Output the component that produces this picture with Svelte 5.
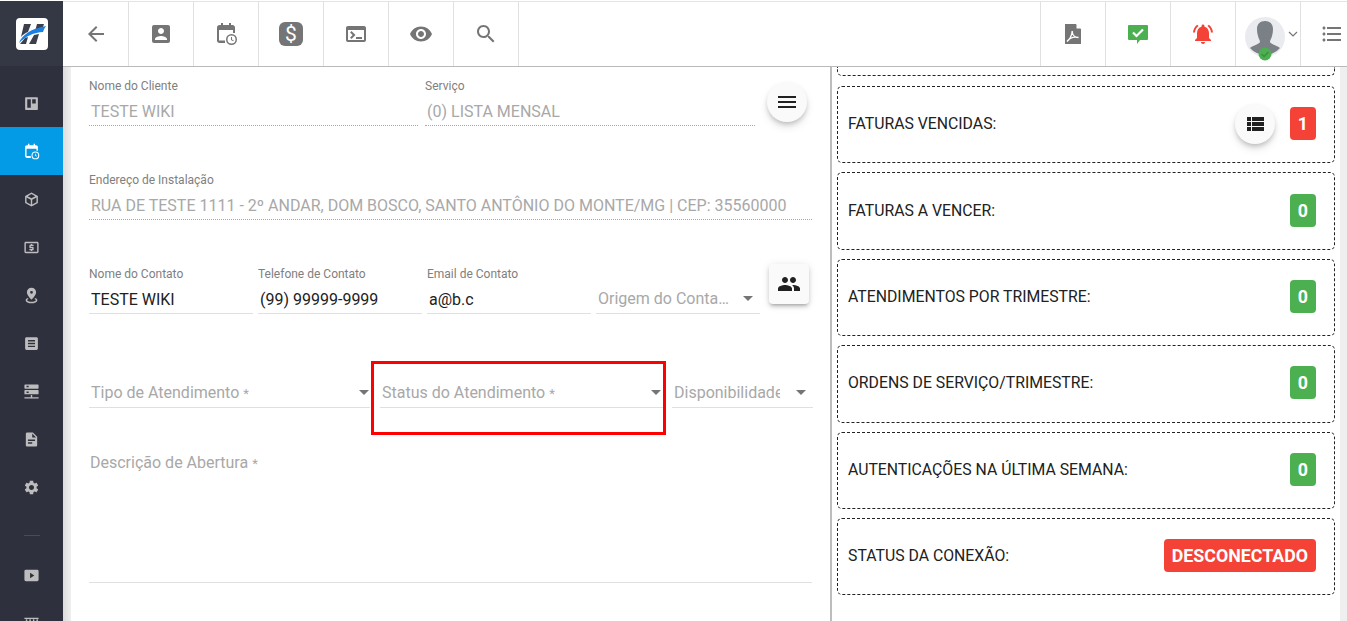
<script>
  const icons = {
    back: 'M20 11H7.83l5.59-5.59L12 4l-8 8 8 8 1.41-1.41L7.83 13H20v-2z',
    contact: 'M3 5v14a2 2 0 0 0 2 2h14c1.1 0 2-.9 2-2V5c0-1.1-.9-2-2-2H5a2 2 0 0 0-2 2zm12 4c0 1.66-1.34 3-3 3s-3-1.34-3-3 1.34-3 3-3 3 1.34 3 3zm-9 8c0-2 4-3.1 6-3.1s6 1.1 6 3.1v1H6v-1z',
    schedule: 'M7 1h2v2h6V1h2v2h1.500C19.900 3 21 4.100 21 5.500V11h-2V8H5v10.500h6V21H5.500C4.100 21 3 19.900 3 18.500v-13C3 4.100 4.100 3 5.500 3H7V1zM17.500 12a5.500 5.500 0 1 1 0 11 5.500 5.500 0 0 1 0-11zm0 1.500a4 4 0 1 0 0 8 4 4 0 0 0 0-8zM17 15h1v2.400l1.800 1-.5.8L17 18v-3z',
    terminal: 'M20 4H4c-1.110 0-2 .9-2 2v12c0 1.100.89 2 2 2h16c1.100 0 2-.9 2-2V6c0-1.100-.9-2-2-2zm0 14H4V8h16v10zm-2-1h-6v-2h6v2zM7.500 17l-1.410-1.410L8.670 13l-2.590-2.590L7.500 9l4 4-4 4z',
    eye: 'M12 4.500C7 4.500 2.730 7.610 1 12c1.730 4.390 6 7.500 11 7.500s9.270-3.110 11-7.500c-1.730-4.390-6-7.500-11-7.500zM12 17c-2.760 0-5-2.240-5-5s2.240-5 5-5 5 2.240 5 5-2.240 5-5 5zm0-8c-1.660 0-3 1.340-3 3s1.340 3 3 3 3-1.340 3-3-1.340-3-3-3z',
    search: 'M15.500 14h-.79l-.28-.27C15.410 12.590 16 11.110 16 9.500 16 5.910 13.090 3 9.500 3S3 5.910 3 9.500 5.910 16 9.500 16c1.610 0 3.090-.59 4.230-1.570l.27.28v.79l5 4.990L20.490 19l-4.990-5zm-6 0C7.010 14 5 11.990 5 9.500S7.010 5 9.500 5 14 7.010 14 9.500 11.990 14 9.500 14z',
    chat: 'M3 3h18a1 1 0 0 1 1 1v13a1 1 0 0 1-1 1h-7l-3 4v-4H3a1 1 0 0 1-1-1V4a1 1 0 0 1 1-1z',
    bell: 'M7.580 4.080L6.150 2.650C3.750 4.480 2.170 7.300 2.030 10.500h2c.15-2.650 1.510-4.970 3.550-6.420zm12.390 6.420h2c-.15-3.200-1.730-6.020-4.120-7.850l-1.420 1.430c2.020 1.450 3.390 3.770 3.540 6.420zM18 11c0-3.070-1.640-5.640-4.500-6.320V4c0-.83-.67-1.500-1.500-1.500s-1.500.67-1.500 1.500v.68C7.630 5.360 6 7.920 6 11v5l-2 2v1h16v-1l-2-2v-5zm-6 11c.14 0 .27-.01.4-.04.65-.14 1.180-.58 1.440-1.180.1-.24.15-.5.15-.78h-4c.01 1.100.9 2 2.010 2z',
    list: 'M4 10.500c-.83 0-1.500.67-1.500 1.500s.67 1.500 1.500 1.500 1.500-.67 1.500-1.500-.67-1.500-1.500-1.500zm0-6c-.83 0-1.500.67-1.500 1.500S3.170 7.500 4 7.500 5.500 6.830 5.500 6 4.830 4.500 4 4.500zm0 12c-.83 0-1.500.68-1.500 1.500s.68 1.500 1.500 1.500 1.500-.68 1.500-1.500-.67-1.500-1.500-1.500zM7 19h14v-2H7v2zm0-6h14v-2H7v2zm0-8v2h14V5H7z',
    menu: 'M3 18h18v-2H3v2zm0-5h18v-2H3v2zm0-7v2h18V6H3z',
    viewList: 'M4 14h4v-4H4v4zm0 5h4v-4H4v4zM4 9h4V5H4v4zm5 5h12v-4H9v4zm0 5h12v-4H9v4zM9 5v4h12V5H9z',
    people: 'M16 11c1.660 0 2.990-1.340 2.990-3S17.660 5 16 5c-1.660 0-3 1.340-3 3s1.340 3 3 3zm-8 0c1.660 0 2.990-1.340 2.990-3S9.660 5 8 5C6.340 5 5 6.340 5 8s1.340 3 3 3zm0 2c-2.330 0-7 1.170-7 3.500V19h14v-2.500c0-2.330-4.670-3.500-7-3.500zm8 0c-.29 0-.62.02-.97.05 1.160.84 1.970 1.970 1.970 3.450V19h6v-2.500c0-2.330-4.670-3.500-7-3.500z',
    board: 'M4 3h16a1 1 0 0 1 1 1v16a1 1 0 0 1-1 1H4a1 1 0 0 1-1-1V4a1 1 0 0 1 1-1zm2 3v12h5V6H6zm7 0v6h5V6h-5z',
    box: 'M12 2l9 5v10l-9 5-9-5V7l9-5zm0 2.300L6.600 7.300 12 10.300l5.400-3L12 4.300zM5 9v6.800l6 3.300v-6.800L5 9zm14 0l-6 3.300v6.800l6-3.300V9z',
    money: 'M11 17h2v-1h1c.55 0 1-.45 1-1v-3c0-.55-.45-1-1-1h-3v-1h4V8h-2V7h-2v1h-1c-.55 0-1 .45-1 1v3c0 .55.45 1 1 1h3v1H9v2h2v1zm9-13H4c-1.110 0-1.990.89-1.990 2L2 18c0 1.110.89 2 2 2h16c1.110 0 2-.89 2-2V6c0-1.110-.89-2-2-2zm0 14H4V6h16v12z',
    pin: 'M12 1a6.500 6.500 0 0 1 6.500 6.500C18.500 12 12 18 12 18S5.500 12 5.500 7.500A6.500 6.500 0 0 1 12 1zm0 4.500a2 2 0 1 0 0 4 2 2 0 0 0 0-4zM6.500 15.500l1.300 1.400C6.400 17.400 5.800 18 5.800 18.600c0 1.200 2.800 2.200 6.200 2.200s6.200-1 6.200-2.200c0-.6-.6-1.200-2-1.700l1.300-1.400c1.800.8 2.700 1.900 2.700 3.100 0 2.500-3.600 4.400-8.200 4.400s-8.200-1.900-8.200-4.400c0-1.200.9-2.300 2.700-3.100z',
    article: 'M19 3H5c-1.100 0-2 .9-2 2v14c0 1.100.9 2 2 2h14c1.100 0 2-.9 2-2V5c0-1.100-.9-2-2-2zm-2 14H7v-2h10v2zm0-4H7v-2h10v2zm0-4H7V7h10v2z',
    server: 'M3 2h18a1 1 0 0 1 1 1v4a1 1 0 0 1-1 1H3a1 1 0 0 1-1-1V3a1 1 0 0 1 1-1zm2 2v2h3V4H5zm-2 6h18a1 1 0 0 1 1 1v4a1 1 0 0 1-1 1H3a1 1 0 0 1-1-1v-4a1 1 0 0 1 1-1zm2 2v2h3v-2H5zm6 5h2v3h9v2H2v-2h9v-3z',
    doc: 'M14 2H6c-1.100 0-1.990.9-1.990 2L4 20c0 1.100.89 2 1.990 2H18c1.100 0 2-.9 2-2V8l-6-6zm-1 16H7v-2h6v2zm4-4H7v-2h10v2zm-4-5V3.500L18.500 9H13z',
    gear: 'M19.140 12.940c.04-.3.06-.61.06-.94 0-.32-.02-.64-.07-.94l2.030-1.580c.18-.14.23-.41.12-.61l-1.920-3.320c-.12-.22-.37-.29-.59-.22l-2.390.96c-.5-.38-1.030-.7-1.620-.94l-.36-2.540c-.04-.24-.24-.41-.48-.41h-3.840c-.24 0-.43.17-.47.41l-.36 2.540c-.59.24-1.130.57-1.620.94l-2.390-.96c-.22-.08-.47 0-.59.22L2.740 8.870c-.12.21-.08.47.12.61l2.030 1.580c-.05.3-.09.63-.09.94s.02.64.07.94l-2.030 1.580c-.18.14-.23.41-.12.61l1.920 3.320c.12.22.37.29.59.22l2.390-.96c.5.38 1.030.7 1.620.94l.36 2.540c.05.24.24.41.48.41h3.840c.24 0 .44-.17.47-.41l.36-2.540c.59-.24 1.130-.56 1.620-.94l2.390.96c.22.08.47 0 .59-.22l1.920-3.320c.12-.22.07-.47-.12-.61l-2.010-1.580zM12 15.600c-1.980 0-3.600-1.620-3.600-3.600s1.620-3.600 3.600-3.600 3.600 1.620 3.600 3.600-1.620 3.600-3.600 3.600z',
    video: 'M4 4h16a2 2 0 0 1 2 2v12a2 2 0 0 1-2 2H4a2 2 0 0 1-2-2V6a2 2 0 0 1 2-2zm6 4v8l6-4-6-4z',
    books: 'M2 4h20v1.500H2zM4 6h2v14H4zM9 6h2v14H9zM14 6h2v14h-2zM19 6h2v14h-2z'
  };

  const sideTop = ['board', 'schedule', 'box', 'money', 'pin', 'article', 'server', 'doc', 'gear'];
  const sideBottom = ['video', 'books'];
  const leftTabs = ['contact', 'schedule', 'dollar', 'terminal', 'eye', 'search'];

  const cards = [
    { label: 'FATURAS VENCIDAS:', value: '1', tone: 'red', action: true },
    { label: 'FATURAS A VENCER:', value: '0', tone: 'green' },
    { label: 'ATENDIMENTOS POR TRIMESTRE:', value: '0', tone: 'green' },
    { label: 'ORDENS DE SERVIÇO/TRIMESTRE:', value: '0', tone: 'green' },
    { label: 'AUTENTICAÇÕES NA ÚLTIMA SEMANA:', value: '0', tone: 'green' },
    { label: 'STATUS DA CONEXÃO:', value: 'DESCONECTADO', tone: 'red' }
  ];
</script>

{#snippet icon(name, cls = '')}
  <svg class="icon {cls}" viewBox="0 0 24 24"><path d={icons[name]} /></svg>
{/snippet}

<div class="app">
  <aside class="sidebar">
    <div class="logo-area">
      <svg class="logo" viewBox="0 0 32 32">
        <rect width="32" height="32" rx="4" fill="#fff" />
        <path d="M8 6h7l-3 8c-2.500 1-5 2.500-7 5zM21 6h7l-2 6-7 1.500zM18 17l5-1-3 10h-7zM9 20l3-1-2 7H4z" fill="#3b404b" />
        <path d="M3 25C6 17 14 11 30 8c-1.500 2-2.500 4-3 6-9 .5-17 4-24 11z" fill="#1a7fe0" />
      </svg>
    </div>
    <nav class="side-nav">
      {#each sideTop as name, i}
        <div class="side-item" class:active={i === 1}>{@render icon(name, 'side-icon')}</div>
      {/each}
      <div class="side-sep"><span></span></div>
      {#each sideBottom as name}
        <div class="side-item">{@render icon(name, 'side-icon')}</div>
      {/each}
    </nav>
  </aside>

  <div class="main">
    <header class="topbar">
      <div class="tab first">{@render icon('back')}</div>
      {#each leftTabs as name}
        <div class="tab">
          {#if name === 'dollar'}
            <span class="dollar">$</span>
          {:else}
            {@render icon(name)}
          {/if}
        </div>
      {/each}
      <div class="spacer"></div>
      <div class="tab right">
        <svg class="icon" viewBox="0 0 24 24">
          <path d="M4 2h11l5 5v15H4z" />
          <path class="fold" d="M15.500 2l4.500 4.500h-4.500z" />
          <path class="swoosh" d="M6 19.500c2.500-1.500 5-6 5.200-10.500.1 3.500 2.300 6.500 6.300 6.500-3.500-.8-8.500 0-11.500 4z" />
        </svg>
      </div>
      <div class="tab right">
        <svg class="icon" viewBox="0 0 24 24">
          <path class="green" d={icons.chat} />
          <path class="tick" d="M7 10.500l3.500 3.500 6.500-6.500" />
        </svg>
      </div>
      <div class="tab right">{@render icon('bell', 'bell')}</div>
      <div class="tab right user">
        <div class="avatar">
          <svg viewBox="0 0 40 40">
            <circle cx="20" cy="20" r="20" fill="#e9ebee" />
            <path d="M20 4c5 0 8 3 8 8 0 3-.5 5-1 7-.5 2.500-2 4-2 6 0 1.500 7 3.500 10 6a20 20 0 0 1-30 0c3-2.500 10-4.500 10-6 0-2-1.500-3.500-2-6-.5-2-1-4-1-7 0-5 3-8 8-8z" fill="#7b8087" />
          </svg>
          <svg class="status" viewBox="0 0 14 14">
            <circle cx="7" cy="7" r="6.500" fill="#4caf50" />
            <path d="M3.500 7l2.500 2.500 4.500-4.500" fill="none" stroke="#3d8c40" stroke-width="1.300" />
          </svg>
        </div>
        <svg class="chevron" viewBox="0 0 10 6"><path d="M1 1l4 4 4-4" /></svg>
      </div>
      <div class="tab right last">{@render icon('list')}</div>
    </header>

    <div class="body">
      <section class="form">
        <div class="row row-client">
          <div class="field w-client">
            <span class="label">Nome do Cliente</span>
            <div class="value readonly">TESTE WIKI</div>
          </div>
          <div class="field w-service">
            <span class="label">Serviço</span>
            <div class="value readonly">(0) LISTA MENSAL</div>
          </div>
          <button class="round menu-btn">{@render icon('menu', 'dark')}</button>
        </div>

        <div class="row row-address">
          <div class="field grow">
            <span class="label">Endereço de Instalação</span>
            <div class="value readonly">RUA DE TESTE 1111 - 2º ANDAR, DOM BOSCO, SANTO ANTÔNIO DO MONTE/MG | CEP: 35560000</div>
          </div>
        </div>

        <div class="row row-contact">
          <div class="field w-contact">
            <span class="label">Nome do Contato</span>
            <div class="value solid">TESTE WIKI</div>
          </div>
          <div class="field w-contact">
            <span class="label">Telefone de Contato</span>
            <div class="value solid">(99) 99999-9999</div>
          </div>
          <div class="field w-contact">
            <span class="label">Email de Contato</span>
            <div class="value solid">a@b.c</div>
          </div>
          <div class="select w-contact">
            <span class="placeholder ellipsis">Origem do Contato</span>
            <i class="caret"></i>
          </div>
          <button class="square">{@render icon('people', 'dark')}</button>
        </div>

        <div class="row row-select">
          <div class="select w-type">
            <span class="placeholder">Tipo de Atendimento{' '}<small>*</small></span>
            <i class="caret"></i>
          </div>
          <div class="select w-status">
            <span class="placeholder">Status do Atendimento{' '}<small>*</small></span>
            <i class="caret"></i>
          </div>
          <div class="select w-avail">
            <span class="placeholder clip">Disponibilidade</span>
            <i class="caret"></i>
          </div>
        </div>

        <div class="textarea">Descrição de Abertura{' '}<small>*</small></div>
      </section>

      <section class="stats">
        <div class="card partial"></div>
        {#each cards as card}
          <div class="card">
            <span class="card-label">{card.label}</span>
            {#if card.action}
              <button class="round action">{@render icon('viewList', 'dark')}</button>
            {/if}
            <span class="badge {card.tone}">{card.value}</span>
          </div>
        {/each}
      </section>
    </div>
  </div>

  <div class="highlight"></div>
</div>

<style>
  :global(body) {
    margin: 0;
    background: #fff;
  }

  .app {
    position: relative;
    display: flex;
    height: 620px;
    padding-top: 1px;
    overflow: hidden;
    font-family: Roboto, "Liberation Sans", sans-serif;
  }

  .sidebar {
    flex: 0 0 63px;
    background: #2e303e;
    display: flex;
    flex-direction: column;
  }

  .logo-area {
    height: 65px;
    background: #343844;
    display: flex;
    align-items: center;
    justify-content: center;
    flex: none;
  }

  .logo {
    width: 32px;
    height: 32px;
  }

  .side-nav {
    padding-top: 13px;
  }

  .side-item {
    height: 48px;
    display: flex;
    align-items: center;
    justify-content: center;
  }

  .side-item.active {
    background: #039be5;
  }

  .side-item.active :global(.side-icon) {
    fill: #fff;
  }

  .side-sep {
    box-sizing: border-box;
    height: 40px;
    padding-top: 24px;
    display: flex;
    justify-content: center;
  }

  .side-sep span {
    width: 16px;
    height: 1px;
    background: #4a4c59;
  }

  .icon {
    width: 24px;
    height: 24px;
    fill: #757575;
    display: block;
  }

  .icon.side-icon {
    width: 17px;
    height: 17px;
    fill: #bdbdbd;
  }

  .icon.dark {
    fill: #212121;
  }

  .icon.bell {
    fill: #f44336;
  }

  .green {
    fill: #4caf50;
  }

  .tick {
    fill: none;
    stroke: #fff;
    stroke-width: 2.200;
  }

  .fold {
    fill: #fff;
  }

  .swoosh {
    fill: none;
    stroke: #fff;
    stroke-width: 1.300;
  }

  .main {
    flex: 1;
    min-width: 0;
    display: flex;
    flex-direction: column;
  }

  .topbar {
    flex: none;
    height: 64px;
    display: flex;
    background: #fff;
    border-top: 1px solid #e4e4e4;
    border-bottom: 1px solid #b9b9b9;
  }

  .tab {
    flex: 0 0 65px;
    box-sizing: border-box;
    border-right: 1px solid #e0e0e0;
    display: flex;
    align-items: center;
    justify-content: center;
  }

  .tab.first {
    flex-basis: 66px;
  }

  .tab.right {
    border-right: 0;
    border-left: 1px solid #e0e0e0;
  }

  .tab.last {
    flex-basis: 47px;
    padding-left: 16px;
  }

  .spacer {
    flex: 1;
  }

  .dollar {
    width: 24px;
    height: 24px;
    border-radius: 6px;
    background: #757575;
    color: #fff;
    font-size: 21px;
    line-height: 24px;
    text-align: center;
  }

  .user {
    justify-content: flex-start;
    padding-left: 9px;
    gap: 3px;
  }

  .avatar {
    position: relative;
    width: 40px;
    height: 40px;
    margin-top: 6px;
  }

  .avatar svg {
    display: block;
    width: 40px;
    height: 40px;
  }

  .avatar .status {
    position: absolute;
    left: 13px;
    top: 30px;
    width: 14px;
    height: 14px;
  }

  .chevron {
    width: 10px;
    height: 6px;
    fill: none;
    stroke: #757575;
    stroke-width: 1.200;
  }

  .body {
    flex: 1;
    min-height: 0;
    display: flex;
    background: #efefef linear-gradient(90deg, #dcdcdc, #efefef 8px);
    padding-left: 8px;
  }

  .form {
    flex: 0 0 761px;
    min-width: 0;
    box-sizing: border-box;
    background: #fff;
    padding: 12px 18px 0 18px;
    border-right: 2px solid;
    border-image: linear-gradient(90deg, #eaeaea, #bdbdbd) 1;
  }

  .row {
    display: flex;
    align-items: flex-end;
  }

  .row-client {
    gap: 7px;
  }

  .row-address {
    margin-top: 47px;
  }

  .row-contact {
    margin-top: 44px;
    gap: 5px;
  }

  .row-select {
    margin-top: 67px;
  }

  .field {
    display: flex;
    flex-direction: column;
    min-width: 0;
  }

  .grow {
    flex: 1;
  }

  .w-client {
    flex: 0 0 329px;
  }

  .w-service {
    flex: 0 0 330px;
  }

  .w-contact {
    flex: 0 0 164px;
  }

  .label {
    font-size: 12px;
    line-height: 14px;
    color: #808080;
  }

  .value {
    margin-top: 6px;
    padding-left: 2px;
    font-size: 16px;
    line-height: 25px;
    height: 26px;
    white-space: nowrap;
  }

  .readonly {
    color: #a8a8a8;
    border-bottom: 1px dotted #a9a9a9;
  }

  .solid {
    color: #212121;
    border-bottom: 1px solid #e0e0e0;
  }

  .select {
    box-sizing: border-box;
    height: 27px;
    padding: 0 4px 4px 2px;
    display: flex;
    align-items: center;
    justify-content: space-between;
    border-bottom: 1px solid #e0e0e0;
    min-width: 0;
  }

  .select.w-type {
    flex: 0 0 281px;
    padding-right: 0;
  }

  .select.w-status {
    flex: 0 0 284px;
    margin-left: 10px;
    padding-right: 0;
  }

  .select.w-avail {
    flex: 0 0 141px;
    margin-left: 8px;
  }

  .placeholder {
    font-size: 16px;
    color: #a8a8a8;
    white-space: nowrap;
  }

  small {
    font-size: 13px;
  }

  .ellipsis {
    width: 132px;
    overflow: hidden;
    text-overflow: ellipsis;
  }

  .clip {
    width: 106px;
    overflow: hidden;
  }

  .caret {
    width: 0;
    height: 0;
    border-left: 5px solid transparent;
    border-right: 5px solid transparent;
    border-top: 5px solid #757575;
    margin-right: 3px;
  }

  .w-type .caret {
    margin-right: 1px;
  }

  .textarea {
    margin-top: 45px;
    height: 129px;
    font-size: 16px;
    line-height: 20px;
    color: #a8a8a8;
    border-bottom: 1px solid #e0e0e0;
    padding-left: 1px;
  }

  button {
    border: 0;
    padding: 0;
    background: #fafafa;
    display: flex;
    align-items: center;
    justify-content: center;
    flex: none;
  }

  .round {
    width: 40px;
    height: 40px;
    border-radius: 50%;
    box-shadow: 0 3px 5px -1px rgba(0, 0, 0, 0.2), 0 5px 8px rgba(0, 0, 0, 0.1);
  }

  .menu-btn {
    margin-left: 5px;
    margin-top: 3px;
    align-self: flex-start;
  }

  .square {
    width: 40px;
    height: 40px;
    border-radius: 4px;
    margin-left: 4px;
    margin-bottom: 10px;
    box-shadow: 0 3px 3px -2px rgba(0, 0, 0, 0.2), 0 3px 4px rgba(0, 0, 0, 0.14), 0 1px 8px rgba(0, 0, 0, 0.1);
  }

  .stats {
    flex: 0 0 508px;
    box-sizing: border-box;
    padding: 0 5px;
    background: #fff;
  }

  .card {
    box-sizing: border-box;
    height: 77.400px;
    margin-bottom: 9px;
    padding: 0 18px 2px 10px;
    display: flex;
    align-items: center;
    border: 1px dashed #222;
    border-radius: 5px;
  }

  .card.partial {
    height: 9px;
    margin-bottom: 10px;
    border-top: 0;
    border-radius: 0 0 5px 5px;
  }

  .card-label {
    flex: 1;
    font-size: 15.800px;
    color: #212121;
  }

  .action {
    margin-right: 15px;
  }

  .badge {
    min-width: 10px;
    height: 33px;
    padding: 0 8px;
    border-radius: 4px;
    color: #fff;
    font-size: 17.800px;
    font-weight: 700;
    line-height: 33px;
    text-align: center;
  }

  .badge.red {
    background: #f44336;
  }

  .badge.green {
    background: #4caf50;
  }

  .highlight {
    position: absolute;
    left: 371px;
    top: 361px;
    width: 289px;
    height: 68px;
    border: 3px solid #f00;
    pointer-events: none;
  }
</style>
